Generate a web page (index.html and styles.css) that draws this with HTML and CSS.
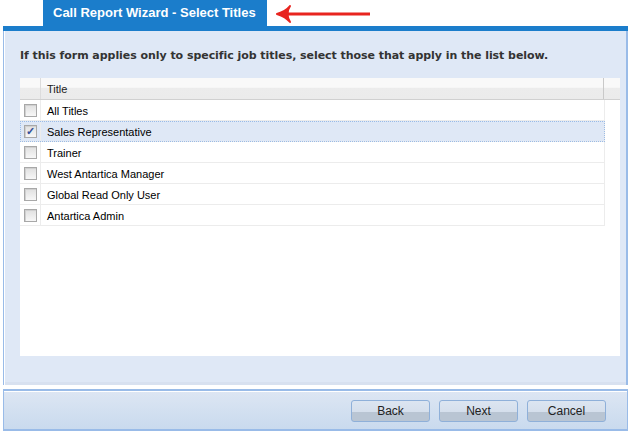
FILE: index.html
```html
<!DOCTYPE html>
<html>
<head>
    <meta charset="UTF-8">
    <title>Call Report Wizard - Select Titles</title>
    <link rel="stylesheet" href="styles.css">
</head>
<body>
    <div class="tabbar">
        <div class="tab">Call Report Wizard - Select Titles</div>
        <svg class="arrow" width="96" height="20" viewBox="0 0 96 20">
            <path d="M94 10 H12" stroke="#e8241f" stroke-width="3" fill="none"/>
            <path d="M14 2 Q10 7 1 10 Q10 13 14 18 Q11 13 12 10 Q11 7 14 2 Z" fill="#e8241f" stroke="#e8241f" stroke-width="2" stroke-linejoin="round"/>
        </svg>
    </div>

    <div class="wizard">
        <div class="panel">
            <p class="intro">If this form applies only to specific job titles, select those that apply in the list below.</p>

            <div class="grid">
                <div class="grid-head">
                    <div class="cell-check"></div>
                    <div class="cell-title">Title</div>
                </div>
                <div class="row">
                    <div class="cell-check"><span class="box"></span></div>
                    <div class="cell-title">All Titles</div>
                </div>
                <div class="row selected">
                    <div class="cell-check"><span class="box checked">&#10003;</span></div>
                    <div class="cell-title">Sales Representative</div>
                </div>
                <div class="row">
                    <div class="cell-check"><span class="box"></span></div>
                    <div class="cell-title">Trainer</div>
                </div>
                <div class="row">
                    <div class="cell-check"><span class="box"></span></div>
                    <div class="cell-title">West Antartica Manager</div>
                </div>
                <div class="row">
                    <div class="cell-check"><span class="box"></span></div>
                    <div class="cell-title">Global Read Only User</div>
                </div>
                <div class="row">
                    <div class="cell-check"><span class="box"></span></div>
                    <div class="cell-title">Antartica Admin</div>
                </div>
            </div>
        </div>

        <div class="footer">
            <button>Back</button>
            <button>Next</button>
            <button>Cancel</button>
        </div>
    </div>
</body>
</html>
```

FILE: styles.css
```css
body {
    margin: 0;
    width: 630px;
    background: #fff;
    font-family: "Liberation Sans", Arial, sans-serif;
}
.tabbar {
    display: flex;
    align-items: center;
    height: 26px;
    padding-left: 43px;
}
.tab {
    height: 26px;
    line-height: 26px;
    padding: 0 11px 0 10px;
    background: #1b7dcb;
    color: #fff;
    font-weight: bold;
    font-size: 13px;
}
.arrow {
    margin-left: 9px;
    margin-top: 2px;
}
.wizard {
    margin-left: 3px;
    width: 625px;
    border-top: 5px solid #1b7dcb;
    box-sizing: border-box;
}
.panel {
    height: 354px;
    box-sizing: border-box;
    padding: 18px 6px 0 16px;
    background: #dfe8f6;
    border-left: 1px solid #99bbe8;
    border-right: 2px solid #99bbe8;
    box-shadow: inset 1px 0 0 #fff, inset 0 -3px 0 #d8e1f0;
}
.intro {
    margin: 0 0 15px;
    height: 14px;
    line-height: 14px;
    font-family: "DejaVu Sans", Verdana, sans-serif;
    font-weight: bold;
    font-size: 11px;
    letter-spacing: -0.05px;
    color: #333;
}
.grid {
    height: 278px;
    background: #fff;
    font-size: 11px;
    color: #000;
}
.grid-head {
    display: flex;
    height: 21px;
    border-bottom: 1px solid #d0d0d0;
    background: linear-gradient(#f9f9f9 0, #f9f9f9 45%, #ececec 46%, #ebebeb 100%);
    color: #222;
}
.grid-head .cell-title {
    flex: none;
    width: 556px;
    border-right: 1px solid #c9c9c9;
}
.cell-check {
    width: 20px;
    flex: none;
    display: flex;
    align-items: center;
    justify-content: center;
    border-right: 1px solid #ececec;
}
.grid-head .cell-check {
    border-right: 1px solid #dcdcdc;
}
.cell-title {
    flex: 1;
    display: flex;
    align-items: center;
    padding-left: 6px;
    padding-top: 1px;
}
.row {
    display: flex;
    width: 584px;
    height: 20px;
    border-bottom: 1px solid #ececec;
    border-right: 1px solid #ececec;
}
.row.selected {
    background: #dfe8f6;
    outline: 1px dotted #99bbe8;
    outline-offset: -1px;
}
.box {
    width: 11px;
    height: 11px;
    border: 1px solid #a8a8a8;
    background: linear-gradient(#e0e0e0, #f7f7f7);
    box-shadow: inset 1px 1px 0 #d0d0d0;
    font-size: 11px;
    line-height: 11px;
    text-align: center;
    color: #34509a;
    font-weight: bold;
}
.footer {
    display: flex;
    justify-content: flex-end;
    gap: 9px;
    height: 42px;
    margin-top: 4px;
    padding: 9px 21px 0 0;
    box-sizing: border-box;
    border: 1px solid #99bbe8;
    border-top: 2px solid #99bbe8;
    border-bottom: 2px solid #99bbe8;
    box-shadow: inset 0 1px 0 #fff;
    background: linear-gradient(#dde6f3, #c9daee);
}
button {
    width: 79px;
    height: 22px;
    padding: 0;
    border: 1px solid #8fb0d9;
    border-radius: 3px;
    background: linear-gradient(#dce5f1 0, #d5dfec 55%, #b9c5d3 56%, #b9c5d3 100%);
    font-family: "Liberation Sans", Arial, sans-serif;
    font-size: 12px;
    color: #222;
}
```
